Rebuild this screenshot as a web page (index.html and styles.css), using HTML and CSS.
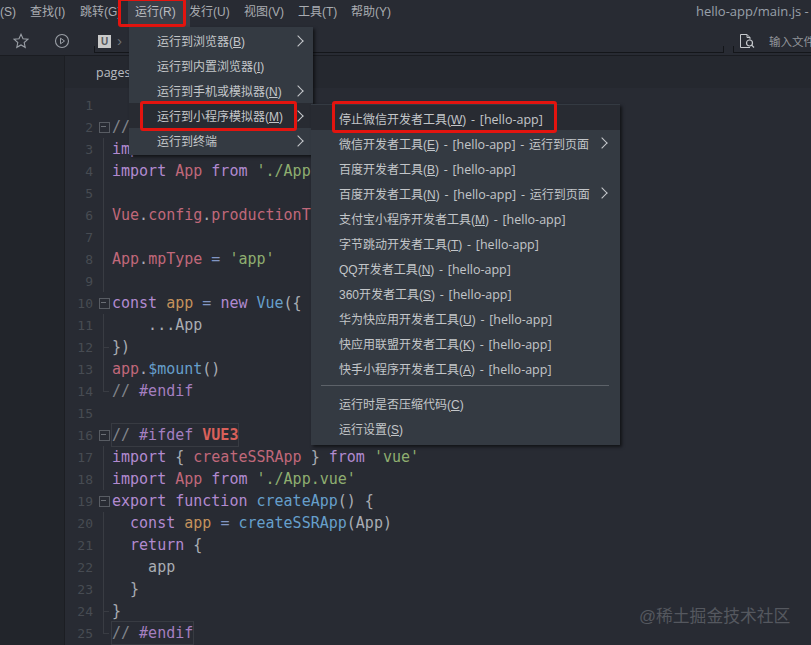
FILE: index.html
```html
<!DOCTYPE html>
<html lang="zh-CN">
<head>
<meta charset="utf-8">
<title>hello-app/main.js</title>
<link rel="stylesheet" href="styles.css">
</head>
<body>
<header class="menubar">
  <nav class="menus">
    <span class="m m-s">(S)</span><span class="m m-f">查找(I)</span><span class="m m-j">跳转(G)</span><span class="m m-r">运行(R)</span><span class="m m-u">发行(U)</span><span class="m m-v">视图(V)</span><span class="m m-t">工具(T)</span><span class="m m-h">帮助(Y)</span>
  </nav>
  <div class="title">hello-app/main.js - HBuilder X</div>
</header>
<div class="toolbar">
  <svg class="ti star" width="16" height="16" viewBox="0 0 16 16"><path d="M8 1.3l2 4.5 4.8.5-3.6 3.2 1 4.8L8 11.900l-4.200 2.400 1-4.800L1.200 6.300 6 5.800z" fill="none" stroke="#9a9fa6" stroke-width="1.100"/></svg>
  <svg class="ti play" width="16" height="16" viewBox="0 0 16 16"><circle cx="8" cy="8" r="6.500" fill="none" stroke="#9a9fa6" stroke-width="1.100"/><path d="M6.500 5.200l4 2.800-4 2.800z" fill="none" stroke="#9a9fa6"/></svg>
  <div class="crumb"><span class="u-box"><span>U</span></span><span class="gt">›</span></div>
  <div class="search"><svg width="16" height="16" viewBox="0 0 16 16"><path d="M11 14.500H1.500V1.500H8l3 3v2M8 1.500v3h3" fill="none" stroke="#c6c9cd" stroke-width="1"/><circle cx="10.500" cy="10" r="3" fill="none" stroke="#c6c9cd" stroke-width="1.200"/><path d="M12.700 12.200l2.300 2.300" stroke="#c6c9cd" stroke-width="1.200"/></svg><span>输入文件</span></div>
</div>
<main class="workspace">
  <aside class="side"></aside>
  <section class="editor">
    <div class="tabs"><div class="tab">pages</div><div class="tab-rest"></div></div>
    <div class="code">
      <div class="l"><i>1</i><b></b><code></code></div>
      <div class="l"><i>2</i><b class="fold"></b><code><span class="d">//</span> <span class="c">#ifndef</span> <span class="v">VUE3</span></code></div>
      <div class="l"><i>3</i><b class="g"></b><code><span class="k">import</span> <span class="r">Vue</span> <span class="k">from</span> <span class="s">'vue'</span></code></div>
      <div class="l"><i>4</i><b class="g"></b><code><span class="k">import</span> <span class="r">App</span> <span class="k">from</span> <span class="s">'./App.vue'</span></code></div>
      <div class="l"><i>5</i><b class="g"></b><code></code></div>
      <div class="l"><i>6</i><b class="g"></b><code><span class="r">Vue</span>.<span class="r">config</span>.<span class="r">productionTip</span> = <span class="o">false</span></code></div>
      <div class="l"><i>7</i><b class="g"></b><code></code></div>
      <div class="l"><i>8</i><b class="g"></b><code><span class="r">App</span>.<span class="r">mpType</span> <span class="n">=</span> <span class="s">'app'</span></code></div>
      <div class="l"><i>9</i><b class="g"></b><code></code></div>
      <div class="l"><i>10</i><b class="fold"></b><code><span class="k">const</span> <span class="o">app</span> <span class="n">=</span> <span class="k">new</span> <span class="f">Vue</span>({</code></div>
      <div class="l"><i>11</i><b class="g"></b><code>    ...App</code></div>
      <div class="l"><i>12</i><b class="e"></b><code>})</code></div>
      <div class="l"><i>13</i><b class="g"></b><code><span class="r">app</span>.<span class="f">$mount</span>()</code></div>
      <div class="l"><i>14</i><b class="x"></b><code><span class="d">//</span> <span class="c">#endif</span></code></div>
      <div class="l"><i>15</i><b></b><code></code></div>
      <div class="l"><i>16</i><b class="fold"></b><code><span class="box"><span class="d">//</span> <span class="c">#ifdef</span> <span class="v">VUE3</span></span></code></div>
      <div class="l"><i>17</i><b class="g"></b><code><span class="k">import</span> { <span class="r">createSSRApp</span> } <span class="k">from</span> <span class="s">'vue'</span></code></div>
      <div class="l"><i>18</i><b class="g"></b><code><span class="k">import</span> <span class="r">App</span> <span class="k">from</span> <span class="s">'./App.vue'</span></code></div>
      <div class="l"><i>19</i><b class="fold"></b><code><span class="k">export</span> <span class="k">function</span> <span class="f">createApp</span>() {</code></div>
      <div class="l"><i>20</i><b class="g"></b><code>  <span class="k">const</span> <span class="o">app</span> <span class="n">=</span> <span class="f">createSSRApp</span>(App)</code></div>
      <div class="l"><i>21</i><b class="g"></b><code>  <span class="k">return</span> {</code></div>
      <div class="l"><i>22</i><b class="g"></b><code>    app</code></div>
      <div class="l"><i>23</i><b class="g"></b><code>  }</code></div>
      <div class="l"><i>24</i><b class="e"></b><code>}</code></div>
      <div class="l"><i>25</i><b class="x"></b><code><span class="box"><span class="d">//</span> <span class="c">#endif</span></span></code></div>
    </div>
  </section>
</main>
<div class="frame f-run"></div>
<div class="menu menu-main">
  <div class="it">运行到浏览器(<u>B</u>)<em></em></div>
  <div class="it">运行到内置浏览器(<u>I</u>)</div>
  <div class="it">运行到手机或模拟器(<u>N</u>)<em></em></div>
  <div class="it on">运行到小程序模拟器(<u>M</u>)<em></em></div>
  <div class="it">运行到终端<em></em></div>
</div>
<div class="menu menu-sub">
  <div class="it on">停止微信开发者工具(<u>W</u>)<span class="p"> - [hello-app]</span></div>
  <div class="it">微信开发者工具(<u>E</u>)<span class="p"> - [hello-app] - </span>运行到页面<em></em></div>
  <div class="it">百度开发者工具(<u>B</u>)<span class="p"> - [hello-app]</span></div>
  <div class="it">百度开发者工具(<u>N</u>)<span class="p"> - [hello-app] - </span>运行到页面<em></em></div>
  <div class="it">支付宝小程序开发者工具(<u>M</u>)<span class="p"> - [hello-app]</span></div>
  <div class="it">字节跳动开发者工具(<u>T</u>)<span class="p"> - [hello-app]</span></div>
  <div class="it">QQ开发者工具(<u>N</u>)<span class="p"> - [hello-app]</span></div>
  <div class="it">360开发者工具(<u>S</u>)<span class="p"> - [hello-app]</span></div>
  <div class="it">华为快应用开发者工具(<u>U</u>)<span class="p"> - [hello-app]</span></div>
  <div class="it">快应用联盟开发者工具(<u>K</u>)<span class="p"> - [hello-app]</span></div>
  <div class="it">快手小程序开发者工具(<u>A</u>)<span class="p"> - [hello-app]</span></div>
  <hr>
  <div class="it">运行时是否压缩代码(<u>C</u>)</div>
  <div class="it">运行设置(<u>S</u>)</div>
</div>
<div class="frame f-main"></div>
<div class="frame f-sub"></div>
<div class="mark">@稀土掘金技术社区</div>
</body>
</html>
```
FILE: styles.css
```css
* { box-sizing: border-box; }
html, body { margin: 0; height: 100%; }
body {
  width: 811px; height: 645px; overflow: hidden; position: relative;
  background: #282b33; color: #c3c6ca;
  font-family: "Liberation Sans", "Noto Sans CJK SC", sans-serif; font-size: 12px;
  display: flex; flex-direction: column;
}
.menubar { height: 27px; flex: none; background: #282b33; display: flex; justify-content: space-between; align-items: flex-start; overflow: hidden; }
.menus { display: flex; height: 27px; padding-left: 1px; line-height: 24px; }
.m { color: #a9acb1; white-space: nowrap; }
.m-s { margin-left: -1px; width: 30px; }
.m-f { width: 50px; }
.m-j { width: 39px; overflow: hidden; margin-right: 9px; }
.m-r { width: 62px; padding-left: 7px; height: 27px; background: #3a3f48; color: #b9bcc0; }
.m-u { width: 55px; margin-left: -1px; }
.m-v { width: 54px; }
.m-t { width: 53px; }
.title { width: 115px; flex: none; overflow: hidden; color: #99a0aa; font-family: "Open Sans", "Liberation Sans", sans-serif; font-size: 13px; line-height: 23px; white-space: nowrap; }
.toolbar { height: 29px; flex: none; background: #282b33; border-bottom: 1px solid #1a1c21; display: flex; align-items: center; }
.ti { flex: none; }
.star { margin-left: 13px; }
.play { margin-left: 25px; }
.crumb { margin: 0 9px 2px 24px; height: 23px; flex: 1; display: flex; align-items: center; gap: 6px; border-bottom: 1px solid #14161a; padding-left: 4px; align-self: flex-end; position: relative; }
.crumb::before, .crumb::after, .search::before { content: ""; position: absolute; bottom: 0; width: 1px; height: 6px; background: #14161a; }
.crumb::before { left: 0; }
.crumb::after { right: 0; }
.u-box { width: 13px; height: 13px; background: #c9c9c9; display: flex; justify-content: center; align-items: center; color: #55585d; font-size: 10px; font-weight: 700; }
.gt { color: #6f7379; font-size: 15px; line-height: 12px; }
.search { width: 78px; height: 23px; flex: none; margin-bottom: 2px; align-self: flex-end; border-bottom: 1px solid #14161a; display: flex; align-items: center; padding-left: 6px; gap: 14px; color: #92959a; font-size: 11.500px; white-space: nowrap; overflow: hidden; position: relative; }
.search::before { left: 0; }
.search svg { flex: none; }
.workspace { flex: 1; display: flex; min-height: 0; }
.side { width: 65px; flex: none; background: #22252b; border-right: 1px solid #1c1e23; }
.editor { flex: 1; display: flex; flex-direction: column; min-width: 0; }
.tabs { height: 32px; flex: none; display: flex; background: #23262c; }
.tab { width: 283px; color: #b9bcc1; padding-left: 31px; line-height: 34px; font-family: "Open Sans", "Liberation Sans", sans-serif; font-size: 12.500px; background: #25282f; }
.tab-rest { flex: 1; background: #25282f; }
.code { flex: 1; background: #282b33; padding: 6px 0 0 2px; font-family: "DejaVu Sans Mono", monospace; font-size: 15px; color: #a9adb3; }
.l { height: 22px; display: flex; align-items: center; }
.l i { width: 26px; flex: none; text-align: right; font-style: normal; font-size: 13px; color: #474b52; }
.l b { width: 12px; height: 22px; flex: none; margin: 0 2px 0 5px; position: relative; font-weight: 400; }
.l code { font: inherit; white-space: pre; }
.fold::before { content: ""; position: absolute; left: 1px; top: 6px; width: 9px; height: 9px; border: 1px solid #585c63; }
.fold::after { content: ""; position: absolute; left: 3px; top: 10px; width: 5px; height: 1px; background: #6a6e75; }
.g::before, .e::before, .x::before { content: ""; position: absolute; left: 5px; top: 0; bottom: 0; width: 1px; background: #393c43; }
.e::after, .x::after { content: ""; position: absolute; left: 5px; top: 11px; width: 6px; height: 1px; background: #393c43; }
.x::before { bottom: 11px; }
.k { color: #b28ad0; }
.r { color: #c0687a; }
.s { color: #8fae70; }
.f { color: #669fcb; }
.o { color: #c4925c; }
.n { color: #8296c4; }
.d { color: #82868c; }
.c { color: #a57fc0; }
.v { color: #d9605a; font-weight: 700; }
.box { outline: 1px solid #383b42; padding: 2px 0; }
.menu { position: absolute; background: #343a42; box-shadow: 2px 2px 3px rgba(0,0,0,.55); color: #c3c6c9; font-size: 12px; }
.menu-main { left: 129px; top: 27px; width: 184px; padding: 1px 0 2px; }
.menu-sub { left: 311px; top: 104px; width: 309px; padding: 1px 0 4px; }
.it { height: 25px; padding-top: 2px; line-height: 25px; position: relative; white-space: nowrap; padding-left: 28px; }
.it.on { background: #282b32; }
.it u { text-underline-offset: 1px; }
.p { font-family: "Open Sans", "Liberation Sans", sans-serif; font-size: 12.500px; word-spacing: 1.500px; white-space: pre; }
.it em { position: absolute; right: 12px; top: 9px; width: 8px; height: 8px; border-top: 1.500px solid #c6c9cc; border-right: 1.500px solid #c6c9cc; transform: rotate(45deg); }
.menu-main .it em { right: 11px; }
.menu-sub .it em { right: 14px; }
.menu hr { height: 1px; border: 0; background: #5d6269; margin: 5px 11px 5px 10px; }
.frame { position: absolute; border: 3px solid #e3140f; border-radius: 3px; }
.f-run { left: 118px; top: -2px; width: 68px; height: 29px; }
.f-main { left: 140px; top: 101px; width: 157px; height: 30px; }
.f-sub { left: 332px; top: 101px; width: 225px; height: 32px; }
.mark { position: absolute; left: 639px; top: 604px; color: #55585f; font-size: 16.800px; line-height: 26px; white-space: nowrap; }
```
